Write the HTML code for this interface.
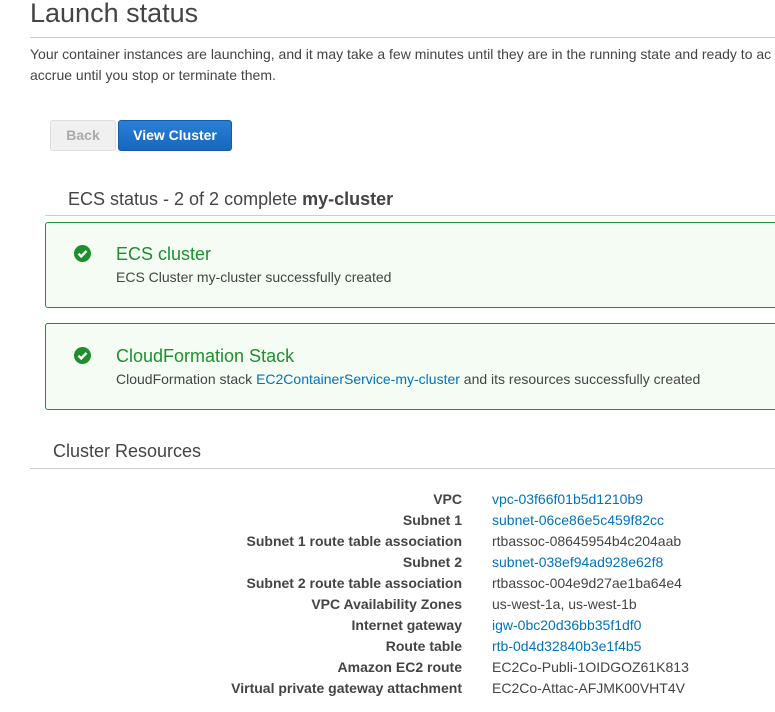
<!DOCTYPE html>
<html><head><style>
body{margin:0;width:775px;height:712px;overflow:hidden;background:#fff;font-family:"Liberation Sans",Arial,sans-serif;color:#444;position:relative}
.a{position:absolute;white-space:nowrap}
h1{position:absolute;left:30px;top:-2px;margin:0;font-size:27px;font-weight:normal;color:#444}
.hr{position:absolute;height:1px;background:#ccc}
.btn{position:absolute;top:120px;height:29px;border-radius:3px;font-size:14px;font-weight:bold;line-height:29px;text-align:center}
.box{position:absolute;left:45px;width:740px;border:1px solid #1d8f2e;border-radius:3px;background:#f4fcf4}
.t{position:absolute;left:70px;font-size:18px;color:#1d8f2e}
.s{position:absolute;left:70px;font-size:14px;color:#444}
.ic{position:absolute;left:28px;width:17px;height:17px;border-radius:50%;background:#1d8f2e}
a{color:#0073bb;text-decoration:none}
.row{position:absolute;left:0;width:775px;height:21px;font-size:14px;line-height:21px}
.row b{position:absolute;right:313px;color:#444}
.row span{position:absolute;left:492px;color:#444}
</style></head><body>
<h1>Launch status</h1>
<div class="hr" style="left:30px;top:37px;width:745px"></div>
<div class="a" style="left:30px;top:44px;font-size:14px;line-height:21px">Your container instances are launching, and it may take a few minutes until they are in the running state and ready to ac<br>accrue until you stop or terminate them.</div>
<div class="btn" style="left:50px;width:64px;background:#f0f0f0;border:1px solid #ddd;color:#aaa">Back</div>
<div class="btn" style="left:118px;width:112px;background:linear-gradient(#2a7fd3,#1667c0);border:1px solid #155ca8;color:#fff">View Cluster</div>
<div class="a" style="left:68px;top:189px;font-size:18px;color:#444">ECS status - 2 of 2 complete <b>my-cluster</b></div>
<div class="hr" style="left:45px;top:215px;width:730px"></div>
<div class="box" style="top:222px;height:84px">
<svg class="ic" style="top:22px" viewBox="0 0 17 17"><path d="M4.5 8.8l2.7 2.6 5.3-5.4" stroke="#fff" stroke-width="2.4" fill="none"/></svg>
<div class="t" style="top:21px">ECS cluster</div>
<div class="s" style="top:46px">ECS Cluster my-cluster successfully created</div>
</div>
<div class="box" style="top:323px;height:85px">
<svg class="ic" style="top:23px" viewBox="0 0 17 17"><path d="M4.5 8.8l2.7 2.6 5.3-5.4" stroke="#fff" stroke-width="2.4" fill="none"/></svg>
<div class="t" style="top:22px">CloudFormation Stack</div>
<div class="s" style="top:47px">CloudFormation stack <a>EC2ContainerService-my-cluster</a> and its resources successfully created</div>
</div>
<div class="a" style="left:53px;top:441px;font-size:18px">Cluster Resources</div>
<div class="hr" style="left:30px;top:468px;width:745px"></div>
<div class="row" style="top:489px"><b>VPC</b><span><a>vpc-03f66f01b5d1210b9</a></span></div>
<div class="row" style="top:510px"><b>Subnet 1</b><span><a>subnet-06ce86e5c459f82cc</a></span></div>
<div class="row" style="top:531px"><b>Subnet 1 route table association</b><span>rtbassoc-08645954b4c204aab</span></div>
<div class="row" style="top:552px"><b>Subnet 2</b><span><a>subnet-038ef94ad928e62f8</a></span></div>
<div class="row" style="top:573px"><b>Subnet 2 route table association</b><span>rtbassoc-004e9d27ae1ba64e4</span></div>
<div class="row" style="top:594px"><b>VPC Availability Zones</b><span>us-west-1a, us-west-1b</span></div>
<div class="row" style="top:615px"><b>Internet gateway</b><span><a>igw-0bc20d36bb35f1df0</a></span></div>
<div class="row" style="top:636px"><b>Route table</b><span><a>rtb-0d4d32840b3e1f4b5</a></span></div>
<div class="row" style="top:657px"><b>Amazon EC2 route</b><span>EC2Co-Publi-1OIDGOZ61K813</span></div>
<div class="row" style="top:678px"><b>Virtual private gateway attachment</b><span>EC2Co-Attac-AFJMK00VHT4V</span></div>
</body></html>
